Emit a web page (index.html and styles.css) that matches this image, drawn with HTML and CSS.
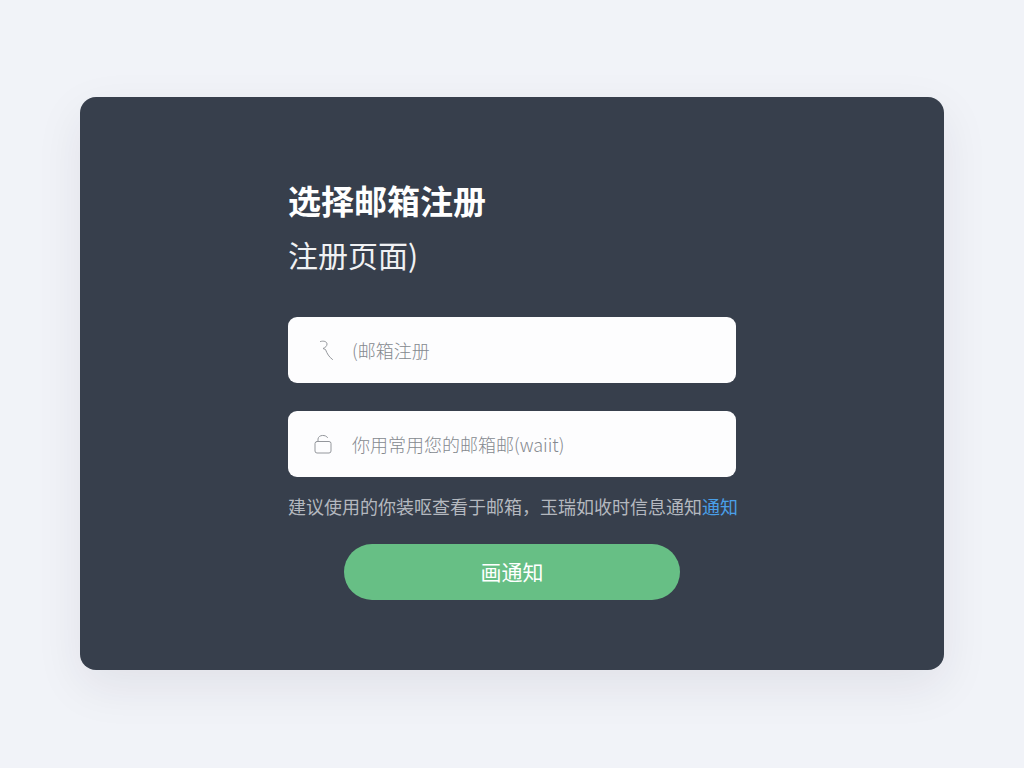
FILE: index.html
```html
<!DOCTYPE html>
<html lang="zh-CN">
<head>
    <meta charset="UTF-8">
    <meta name="viewport" content="width=device-width, initial-scale=1.0">
    <title>选择邮箱注册</title>
    <link rel="stylesheet" href="styles.css">
</head>
<body>
    <main class="card">
        <form class="register-form">
            <h1 class="title">选择邮箱注册</h1>
            <h2 class="subtitle">注册页面)</h2>

            <label class="field" for="email">
                <svg class="field-icon" viewBox="0 0 24 24" aria-hidden="true">
                    <path d="M8.500 3.500c3-1 6.500 0 6.500 2.500 0 2-1.500 3.500-4 4.500l2.500 1c1.500 4 3.500 7.500 7 10"/>
                </svg>
                <input type="text" id="email" placeholder="(邮箱注册" aria-label="邮箱注册">
            </label>

            <label class="field" for="account">
                <svg class="field-icon" viewBox="0 0 24 24" aria-hidden="true">
                    <rect x="3" y="9.500" width="16" height="11.500" rx="2"/>
                    <path d="M6 9.500V7c.5-4.500 8-4.500 9.500-1.500"/>
                </svg>
                <input type="text" id="account" placeholder="你用常用您的邮箱邮(waiit)" aria-label="常用邮箱">
            </label>

            <p class="hint">建议使用的你装呕查看于邮箱，玉瑞如收时信息通知<a href="#">通知</a></p>

            <button type="submit" class="submit">画通知</button>
        </form>
    </main>
</body>
</html>
```

FILE: styles.css
```css
* {
    box-sizing: border-box;
}

body {
    margin: 0;
    padding: 97px 80px;
    background-color: #f1f3f8;
    font-family: "Noto Sans CJK SC", sans-serif;
}

.card {
    padding: 78px 32px 70px;
    border-radius: 16px;
    background-color: #373f4c;
    box-shadow: 0 16px 48px rgba(40, 30, 50, 0.08);
}

.register-form {
    display: flex;
    flex-direction: column;
    max-width: 448px;
    margin: 0 auto;
}

.title {
    margin: 0;
    color: #fff;
    font-size: 33px;
    font-weight: 700;
    line-height: 50px;
}

.subtitle {
    margin: 4px 0 38px;
    color: #f0f1f3;
    font-size: 30px;
    font-weight: 400;
    line-height: 50px;
}

.field {
    display: flex;
    align-items: center;
    gap: 16px;
    height: 66px;
    margin-bottom: 28px;
    padding: 0 24px;
    border-radius: 9px;
    background-color: #fdfdfe;
}

.field-icon {
    flex: none;
    width: 24px;
    height: 24px;
    fill: none;
    stroke: #94979c;
    stroke-width: 1;
    stroke-linecap: round;
    stroke-linejoin: round;
}

.field input {
    flex: 1;
    min-width: 0;
    padding: 0;
    border: none;
    outline: none;
    background: transparent;
    color: #373f4c;
    font-family: inherit;
    font-size: 18px;
    font-weight: 300;
}

.field input::placeholder {
    color: #85898f;
    opacity: 1;
}

.hint {
    margin: -12px 0 25px;
    color: #b4b8bf;
    font-size: 18px;
    font-weight: 400;
    line-height: 26px;
    white-space: nowrap;
}

.hint a {
    color: #4a9fe8;
    text-decoration: none;
}

.submit {
    align-self: center;
    width: 75%;
    height: 56px;
    padding: 0 0 2px;
    border: none;
    border-radius: 28px;
    background-color: #67bf85;
    color: #fff;
    font-family: inherit;
    font-size: 21px;
    font-weight: 400;
    cursor: pointer;
}

@media (max-width: 640px) {
    body {
        padding: 24px 16px;
    }

    .hint {
        white-space: normal;
    }
}
```
